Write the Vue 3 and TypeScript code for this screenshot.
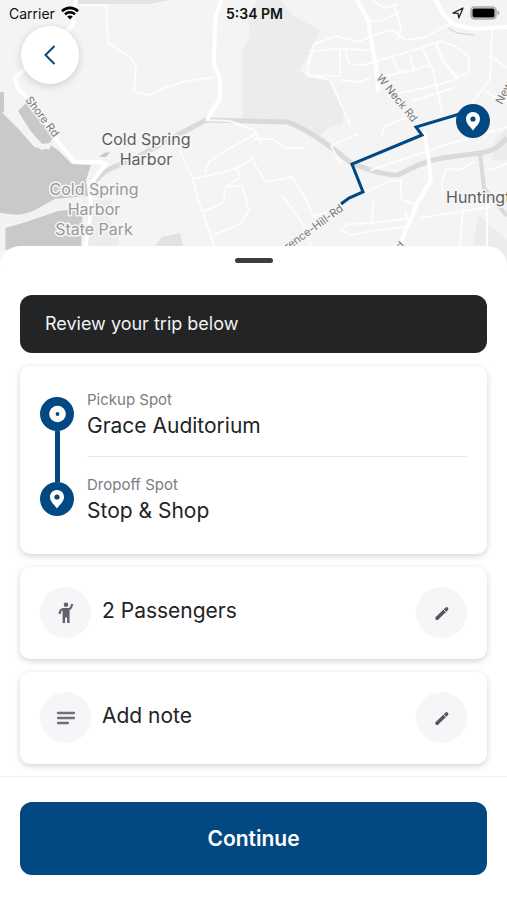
<script setup lang="ts">
import { ref } from 'vue'

interface Stop {
  label: string
  place: string
}

const stops: Stop[] = [
  { label: 'Pickup Spot', place: 'Grace Auditorium' },
  { label: 'Dropoff Spot', place: 'Stop & Shop' },
]

const passengers = ref(2)
</script>

<template>
  <main class="screen">
    <section class="map-area">
      <svg class="map" viewBox="0 0 507 270" preserveAspectRatio="xMidYMin slice" aria-hidden="true">
        <rect width="507" height="270" fill="#f4f4f4" />

        <g fill="#ececec">
          <path d="M257 0H280L293 15L320 30L309 56L299 70L309 78L330 80L344 112L342 124L328 128L318 137L289 121L243 119L242 50L250 36L248 20Z" />
          <path d="M75 0H170L150 4L75 4Z" fill="#e4e4e4" />
          <path d="M495 140L507 128V160H492Z" />
          <path d="M478 215L507 240V270H470Z" />
          <path d="M88 200L112 200L108 216L118 232L119 250H86Z" />
          <path d="M152 250L162 237L180 233L184 250Z" fill="#e2e2e2" />
        </g>

        <g fill="#c9c9c9">
          <path d="M0 92H4V112L20 127L34 145L42 150L52 146L58 150L72 164L91 165L86 180L88 196L55 199L24 216L0 213Z" />
          <path d="M5 228L26 222L58 211L83 208L81 250H5Z" />
          <path d="M99 157L104 153L110 152L106 157Z" />
        </g>
        <path d="M4 111L20 127L36 145L50 147" fill="none" stroke="#f4f4f4" stroke-width="5" />
        <path d="M18 111L26 103L38 110L55 134L50 143L42 144L30 130Z" fill="#c9c9c9" />
        <path d="M0 216C20 222 34 215 51 207C66 201 80 201 90 200M2 220V250" fill="none" stroke="#f2f2f2" stroke-width="7" />

        <g fill="none" stroke="#dadada" stroke-linejoin="round">
          <path d="M94 183C105 168 118 166 130 161L176 136L206 120L287 122C307 128 334 149 351 163C368 170 383 175 398 175C415 166 428 160 443 158L480 153C494 151 501 145 507 138" stroke-width="5" />
          <path d="M480 153L484 188L507 216" stroke-width="4" />
          <path d="M448 28L457 33L474 35" stroke-width="1" stroke="#cfcfcf" />
        </g>

        <g fill="none" stroke="#fff" stroke-linejoin="round" stroke-linecap="round">
          <path d="M221 0L215 20L214 63L220 80V98L208 118M357 0L368 20L373 50L377 74L378 90M424 133L428 154L431 180L418 202L401 242M76 0L73 25L15 78L18 89L34 104L58 142L75 162H99L106 164M85 250L91 212L90 185L104 166" stroke-width="4" />
          <path d="M436 0L443 14L454 25L475 29L507 27" stroke-width="4" />
          <g opacity=".85" stroke-width="2">
            <path d="M82 5H106L108 43L130 57L136 67L134 92L150 95L164 88L187 81L214 77M206 120L230 121L254 130L262 145" />
            <path d="M180 151L193 179L198 200L204 216L214 246M193 179L219 173L237 168L240 177L226 187L223 203L204 211M205 172L210 161L223 152L254 135M237 168L254 158M226 187L242 186L249 210L240 224L214 235" />
            <path d="M307 65L314 44L337 36L358 42L374 35L392 30L405 40L423 38L450 24M310 51L339 49L371 50M312 51L307 75L330 80L345 113L350 124M340 49V76L309 76M346 52L349 64L363 65L391 57L421 48L440 41L455 46L469 57V73L457 77L446 64L436 43" />
            <path d="M374 2L385 8L398 4M370 22L383 20L400 12M394 5L401 28L398 40M392 56L398 70L414 71L410 55M376 78L413 70L431 65M341 80L360 82L370 78M423 50L433 70L442 112M436 45L441 60L457 79L440 84L388 96M412 101L454 88" />
            <path d="M492 28L490 79L472 103M507 68L490 56M381 137L385 126L408 117M485 91L495 97" />
            <path d="M253 162L266 182L292 177L305 197L313 216M255 139H273L285 148H303M340 163L331 146L357 134M367 157L424 134M371 170L445 145L507 127M363 193L387 182L401 180V199L413 204M342 207L314 216" />
            <path d="M373 203L372 224M348 224L371 223L408 219L405 211M348 224L340 230L351 235L371 231L405 227M420 218L490 207M463 210L460 245M474 162L459 170L446 169L442 181L443 197M489 170L507 164M487 205V245M282 195L303 224L313 250" />
          </g>
        </g>

        <path d="M341 204L349 198L363 192L352 164L422 135L416 127L473 110" fill="none" stroke="#024882" stroke-width="3" />

        <g class="halo" font-size="16" text-anchor="middle">
          <g fill="#5f5f5f">
            <text x="146" y="145">Cold Spring</text>
            <text x="146" y="165">Harbor</text>
          </g>
          <g fill="#999">
            <text x="94" y="195">Cold Spring</text>
            <text x="94" y="215">Harbor</text>
            <text x="94" y="235">State Park</text>
          </g>
          <text x="446" y="203" text-anchor="start" fill="#5f5f5f">Huntington</text>
        </g>
        <g class="halo" font-size="11" fill="#777">
          <text transform="translate(25 100) rotate(53)">Shore Rd</text>
          <text transform="translate(376 78) rotate(51)">W Neck Rd</text>
          <text transform="translate(502 105) rotate(-63)">New York Ave</text>
          <text transform="translate(344 210) rotate(-36)" text-anchor="end">Lawrence-Hill-Rd</text>
          <text transform="translate(405 246) rotate(-42)" text-anchor="end">Mill Rd</text>
        </g>

        <circle cx="473" cy="121" r="17" fill="#024882" />
        <path d="M473 112c-4.200 0-7 3-7 7 0 4.500 4.500 8 7 11.500 2.500-3.500 7-7 7-11.500 0-4-2.800-7-7-7z" fill="#fff" />
        <circle cx="473" cy="119" r="2.600" fill="#024882" />
      </svg>

      <div class="status">
        <div class="status-side">
          <span>Carrier</span>
          <svg width="18" height="14" viewBox="0 0 18 14" aria-hidden="true">
            <g fill="none" stroke="#000" stroke-width="2.600">
              <path d="M1 5.200C5.500 .8 12.500 .8 17 5.200" />
              <path d="M4 8.300C6.800 5.500 11.200 5.500 14 8.300" />
            </g>
            <path d="M9 13.500L6.200 10.500C7.700 9.100 10.300 9.100 11.800 10.500Z" />
          </svg>
        </div>
        <strong class="time">5:34 PM</strong>
        <div class="status-side status-end">
          <svg width="12" height="12" viewBox="0 0 12 12" aria-hidden="true">
            <path d="M1 6.200L11 1L6.800 11L6 6.300Z" fill="none" stroke="#222" stroke-width="1.300" stroke-linejoin="round" />
          </svg>
          <svg width="30" height="14" viewBox="0 0 30 14" aria-hidden="true">
            <rect x="1" y="1" width="25" height="12" rx="3.500" fill="#e0e0e0" stroke="#a9a9a9" stroke-width="1.600" />
            <rect x="2.500" y="2.500" width="22" height="9" rx="1.800" />
            <path d="M27.500 4.500C30 5.500 30 8.500 27.500 9.500Z" fill="#a6a6a6" />
          </svg>
        </div>
      </div>

      <button class="back" type="button" aria-label="Back">
        <svg width="12" height="20" viewBox="0 0 12 20" aria-hidden="true">
          <path d="M10.500 1L1.500 10L10.500 19" fill="none" stroke="#024882" stroke-width="2" />
        </svg>
      </button>
    </section>

    <section class="sheet">
      <div class="handle"></div>
      <div class="content">
        <h1 class="banner">Review your trip below</h1>

        <div class="card trip">
          <div class="rail" aria-hidden="true">
            <svg width="34" height="34" viewBox="0 0 34 34">
              <circle cx="17" cy="17" r="17" fill="#024882" />
              <circle cx="17.500" cy="17" r="8.300" fill="#fff" />
              <circle cx="17.500" cy="17" r="1.900" fill="#024882" />
            </svg>
            <div class="rail-line"></div>
            <svg width="34" height="34" viewBox="0 0 34 34">
              <circle cx="17" cy="17" r="17" fill="#024882" />
              <path d="M17 8c-4.200 0-7 3-7 7 0 4.500 4.500 8 7 11.500 2.500-3.500 7-7 7-11.500 0-4-2.800-7-7-7z" fill="#fff" />
              <circle cx="17" cy="15" r="2.600" fill="#024882" />
            </svg>
          </div>
          <ul class="stops">
            <li v-for="stop in stops" :key="stop.label" class="stop">
              <span class="stop-label">{{ stop.label }}</span>
              <span class="value">{{ stop.place }}</span>
            </li>
          </ul>
        </div>

        <div class="card row">
          <span class="disc">
            <svg width="24" height="24" viewBox="0 0 24 24" aria-hidden="true">
              <circle cx="12" cy="3.800" r="2.300" fill="#62626c" />
              <path d="M18.300 3L17.200 6.200Q16.500 8 14.500 8H10.500Q7.200 8 6.300 10.200L5.500 13" fill="none" stroke="#62626c" stroke-width="2.200" />
              <path d="M8.600 7H15.600V22H13.100V16.500H11.100V22H8.600Z" fill="#62626c" />
            </svg>
          </span>
          <span class="value row-text">{{ passengers }} Passengers</span>
          <button class="disc" type="button" aria-label="Edit passengers">
            <svg width="18" height="18" viewBox="0 0 18 18" aria-hidden="true">
              <path d="M4.300 14L13.600 5" stroke="#565560" stroke-width="3.600" stroke-linecap="round" />
              <path d="M2.600 12.500V15.700H5.600Z" fill="#565560" />
              <path d="M10.300 5.200L13.400 8.400" stroke="#f6f6f8" stroke-width=".9" />
            </svg>
          </button>
        </div>

        <div class="card row">
          <span class="disc">
            <svg width="20" height="16" viewBox="0 0 20 16" aria-hidden="true">
              <path d="M2 3H18M2 8H18M2 13H12" stroke="#707078" stroke-width="2.300" stroke-linecap="round" />
            </svg>
          </span>
          <span class="value row-text">Add note</span>
          <button class="disc" type="button" aria-label="Edit note">
            <svg width="18" height="18" viewBox="0 0 18 18" aria-hidden="true">
              <path d="M4.300 14L13.600 5" stroke="#565560" stroke-width="3.600" stroke-linecap="round" />
              <path d="M2.600 12.500V15.700H5.600Z" fill="#565560" />
              <path d="M10.300 5.200L13.400 8.400" stroke="#f6f6f8" stroke-width=".9" />
            </svg>
          </button>
        </div>
      </div>

      <footer class="footer">
        <button class="continue" type="button">Continue</button>
      </footer>
    </section>
  </main>
</template>

<style>
body {
  background: #fff;
}
</style>

<style scoped>
.screen {
  display: flex;
  flex-direction: column;
  min-height: 100vh;
  overflow: hidden;
  font-family: Inter, "Liberation Sans", sans-serif;
  color: #222425;
}

button {
  border: 0;
  padding: 0;
  font: inherit;
  cursor: pointer;
}

svg {
  display: block;
}

.map-area {
  position: relative;
  height: 270px;
  overflow: hidden;
}

.map {
  position: absolute;
  inset: 0;
  width: 100%;
  height: 100%;
}

.halo text {
  paint-order: stroke;
  stroke: #f6f6f6;
  stroke-width: 3px;
  stroke-linejoin: round;
}

.status {
  position: relative;
  display: grid;
  grid-template-columns: 1fr auto 1fr;
  align-items: center;
  height: 26px;
  padding: 0 7px 0 9px;
  font-size: 14px;
  color: #111;
}

.status-side {
  display: flex;
  align-items: center;
  gap: 6px;
}

.status-end {
  justify-content: flex-end;
}

.time {
  font-weight: 600;
}

.back {
  position: relative;
  display: grid;
  place-items: center;
  width: 58px;
  height: 58px;
  margin-left: 21px;
  border-radius: 50%;
  background: #fff;
  box-shadow: 0 2px 8px rgba(0, 0, 0, 0.16);
}

.sheet {
  position: relative;
  flex: 1;
  display: flex;
  flex-direction: column;
  margin-top: -24px;
  border-radius: 20px 20px 0 0;
  background: #fff;
}

.handle {
  width: 38px;
  height: 5px;
  margin: 12px auto 0;
  border-radius: 3px;
  background: #3d3d41;
}

.content {
  display: flex;
  flex-direction: column;
  gap: 13px;
  padding: 32px 20px 12px;
}

.banner {
  margin: 0;
  padding: 15px 25px;
  border-radius: 12px;
  background: #222425;
  color: #f2f2f2;
  font-size: 18px;
  font-weight: 400;
  line-height: 28px;
}

.card {
  border-radius: 10px;
  background: #fff;
  box-shadow: 0 2px 6px rgba(0, 0, 0, 0.18);
}

.trip {
  display: flex;
  gap: 13px;
  padding: 24px 20px 27px;
}

.rail {
  display: flex;
  flex-direction: column;
  align-items: center;
  padding-top: 7px;
}

.rail-line {
  width: 5px;
  height: 51px;
  background: #024882;
}

.stops {
  flex: 1;
  margin: 0;
  padding: 0;
  list-style: none;
}

.stop {
  display: flex;
  flex-direction: column;
}

.stop + .stop {
  margin-top: 14px;
  padding-top: 18px;
  border-top: 1px solid #e8e8e8;
}

.stop-label {
  font-size: 15px;
  line-height: 20px;
  color: #7c7c82;
}

.value {
  font-size: 21px;
  line-height: 32px;
}

.row {
  display: flex;
  align-items: center;
  gap: 11px;
  padding: 20px 20px 21px;
}

.row-text {
  flex: 1;
  padding-bottom: 4px;
}

.disc {
  display: grid;
  place-items: center;
  width: 51px;
  height: 51px;
  border-radius: 50%;
  background: #f6f6f8;
}

.footer {
  padding: 25px 20px;
  border-top: 1px solid #f1f1f1;
}

.continue {
  width: 100%;
  height: 73px;
  border-radius: 12px;
  background: #024882;
  color: #fff;
  font-size: 21px;
  font-weight: 600;
}
</style>
